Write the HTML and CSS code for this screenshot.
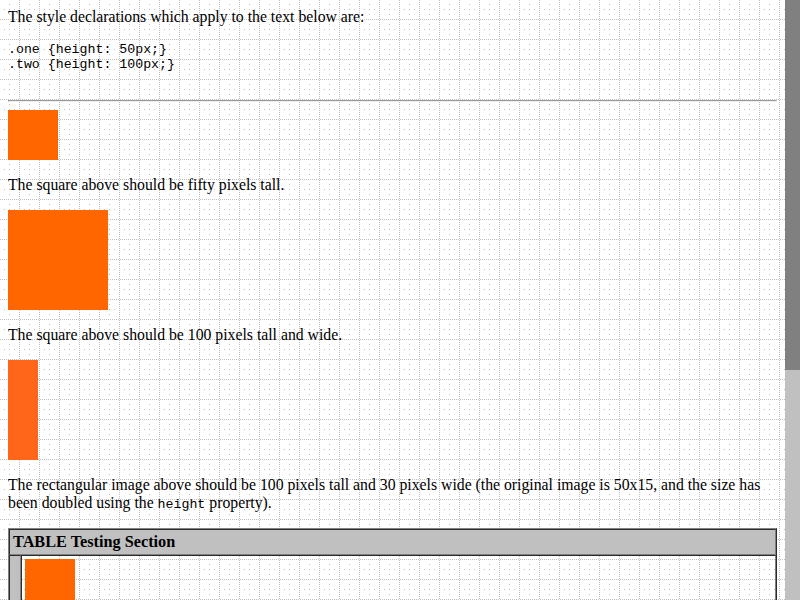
FILE: index.html
```html
<!DOCTYPE html>
<html>
<head>
<meta charset="utf-8">
<title>height</title>
<link rel="stylesheet" href="styles.css">
</head>
<body>
<p class="first">The style declarations which apply to the text below are:</p>
<pre class="decl">.one {height: 50px;}
.two {height: 100px;}

</pre>
<hr class="rule">
<div class="img oran one"></div>
<p>The square above should be fifty pixels tall.</p>
<div class="img oran two"></div>
<p>The square above should be 100 pixels tall and wide.</p>
<div class="img vblank two"></div>
<p>The rectangular image above should be 100 pixels tall and 30 pixels wide (the original image is 50x15, and the size has been doubled using the <code>height</code> property).</p>
<table class="tabletest">
<tr><td colspan="2" class="silver head"><strong>TABLE Testing Section</strong></td></tr>
<tr><td class="silver">&nbsp;</td><td class="content">
<div class="img oran one"></div>
<p>The square above should be fifty pixels tall.</p>
<div class="img oran two"></div>
<p>The square above should be 100 pixels tall and wide.</p>
<div class="img vblank two"></div>
<p class="last">The rectangular image above should be 100 pixels tall and 30 pixels wide (the original image is 50x15, and the size has been doubled using the <code>height</code> property).</p>
</td></tr>
</table>
<div class="scrollbar"><div class="thumb"></div></div>
</body>
</html>
```

FILE: styles.css
```css
html {
  background-color: #ffffff;
  background-image: url("data:image/svg+xml,%3Csvg xmlns='http://www.w3.org/2000/svg' width='20' height='20' shape-rendering='crispEdges'%3E%3Cpath d='M19.5 0V20M0 19.5H20' stroke='%23c0c0c0' stroke-width='1' stroke-dasharray='1 1'/%3E%3Cpath d='M9 4h1v1H9zM4 9h1v1H4zM9 9h1v1H9zM14 9h1v1h-1zM9 14h1v1H9z' fill='%23c0c0c0'/%3E%3C/svg%3E");
  background-repeat: repeat;
}
body {
  margin: 8px 23px 8px 8px;
  font-family: "Liberation Serif", "Times New Roman", serif;
  font-size: 15.75px;
  color: #000000;
}
p {
  margin: 16px 0;
}
p.first {
  margin-top: 0;
}
p.last {
  margin-bottom: 0;
}
pre.decl {
  font-family: "Liberation Mono", "Courier New", monospace;
  font-size: 13.25px;
  line-height: 15px;
  margin: 13px 0;
}
code {
  font-family: "Liberation Mono", "Courier New", monospace;
  font-size: 13.25px;
}
hr.rule {
  margin: 8px 0;
  height: 0;
  border-style: solid;
  border-width: 1px;
  border-color: #9a9a9a #eeeeee #eeeeee #9a9a9a;
}
.img {
  display: block;
}
.oran {
  background: #ff6600;
}
.oran.one {
  width: 50px;
  height: 50px;
}
.oran.two {
  width: 100px;
  height: 100px;
}
.vblank {
  background: #ff661a;
  width: 30px;
}
.vblank.two {
  height: 100px;
}
.tabletest {
  border-collapse: separate;
  border-spacing: 0;
  border: 1px outset #808080;
}
.tabletest td {
  border: 1px inset #808080;
  padding: 3px;
  vertical-align: middle;
}
.tabletest td.silver {
  background: #c0c0c0;
}
.tabletest td.head {
  line-height: 18px;
}
.head strong {
  font-size: 16.25px;
}
.scrollbar {
  position: fixed;
  top: 0;
  right: 0;
  width: 15px;
  height: 100%;
  background: #c0c0c0;
}
.thumb {
  height: 370px;
  background: #808080;
}
```
